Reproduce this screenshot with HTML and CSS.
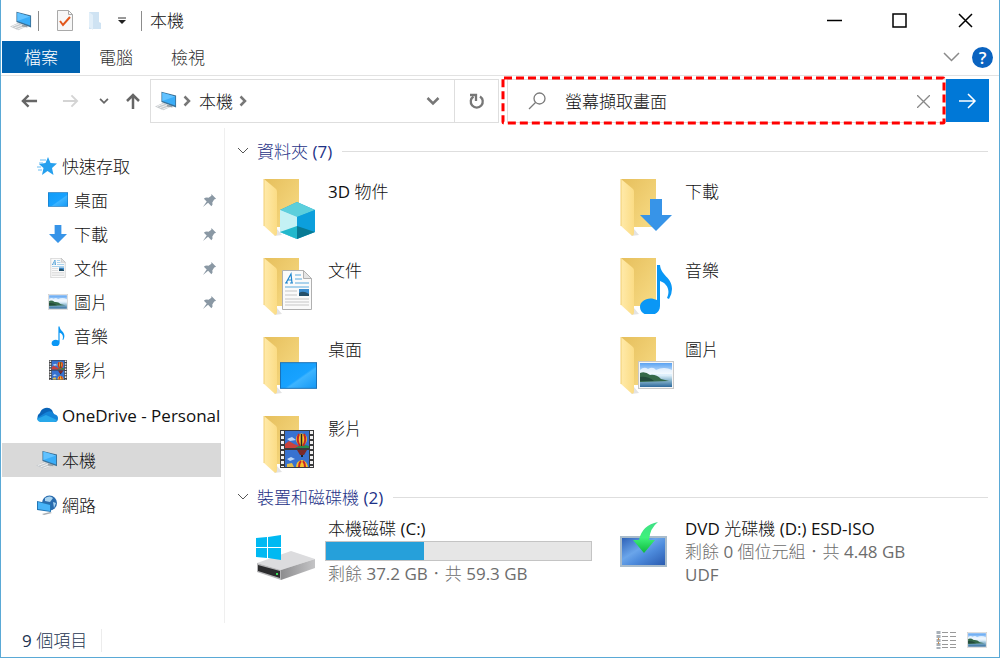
FILE: index.html
```html
<!DOCTYPE html>
<html lang="zh-Hant">
<head>
  <meta charset="UTF-8">
  <title>本機</title>
  <link rel="stylesheet" href="styles.css">
</head>
<body>
  <!-- shared icons -->
  <svg class="sprite" aria-hidden="true">
    <defs>
      <linearGradient id="gBack" x1="0" y1="0" x2="1" y2="1">
        <stop offset="0" stop-color="#e6bf5c"/><stop offset="1" stop-color="#f8dc86"/>
      </linearGradient>
      <linearGradient id="gFlap" x1="0" y1="0" x2="1" y2="0">
        <stop offset="0" stop-color="#ffeaaa"/><stop offset="1" stop-color="#fbdc85"/>
      </linearGradient>
      <linearGradient id="gSky" x1="0" y1="0" x2="0" y2="1">
        <stop offset="0" stop-color="#5aa2f2"/><stop offset="0.5" stop-color="#e4f3fd"/>
        <stop offset="0.72" stop-color="#8db8d0"/><stop offset="1" stop-color="#2f6a9c"/>
      </linearGradient>
      <linearGradient id="gDesk" x1="0" y1="0" x2="1" y2="1">
        <stop offset="0" stop-color="#109cf8"/><stop offset="0.55" stop-color="#18a2ff"/>
        <stop offset="0.6" stop-color="#3db4ff"/><stop offset="1" stop-color="#1599f5"/>
      </linearGradient>
      <linearGradient id="gDvd" x1="0" y1="0" x2="1" y2="1">
        <stop offset="0" stop-color="#2e62b8"/><stop offset="0.4" stop-color="#6aa5ea"/>
        <stop offset="0.6" stop-color="#4d8bdc"/><stop offset="1" stop-color="#2a5bb0"/>
      </linearGradient>
      <linearGradient id="gGreen" x1="0" y1="0" x2="0" y2="1">
        <stop offset="0" stop-color="#3fdf86"/><stop offset="0.5" stop-color="#3ff27c"/>
        <stop offset="1" stop-color="#0fb83c"/>
      </linearGradient>
      <linearGradient id="gMetal" x1="0" y1="0" x2="1" y2="0">
        <stop offset="0" stop-color="#8d8d8f"/><stop offset="1" stop-color="#c4c4c6"/>
      </linearGradient>
    </defs>

    <symbol id="folder" viewBox="0 0 64 64">
      <path d="M18 60l8-1-5-6z" fill="#e3e3e3"/>
      <path d="M8 3h35v48H18z" fill="url(#gBack)"/>
      <path d="M8 3l12 10q1 1 1 3v41q0 4-3 2L8 50z" fill="url(#gFlap)"/>
      <path d="M8 3v47" stroke="#f2cf74" stroke-width="1"/>
    </symbol>

    <symbol id="pc" viewBox="0 0 24 22">
      <path d="M0 17l9-4 9 4-9 4z" fill="#c6cacd"/>
      <path d="M2 17l8-3M5 18.500l8-3M8 20l8-3" stroke="#f4f4f4" stroke-width="1"/>
      <path d="M13 15l6 1v2l-6-1z" fill="#9aa1a6"/>
      <path d="M7 1l16 4v13L7 12z" fill="#3c7197"/>
      <path d="M8 2l14 4v10L8 11z" fill="#3aadf8"/>
      <path d="M8 2l14 4-14 5z" fill="#62c2ff"/>
    </symbol>

    <symbol id="desktop" viewBox="0 0 36 26">
      <rect width="36" height="26" fill="#1a72b8"/>
      <rect x="1" y="1" width="34" height="24" fill="url(#gDesk)"/>
    </symbol>

    <symbol id="down" viewBox="0 0 32 32">
      <path d="M10 0h12v16h10L16 32 0 16h10z" fill="#3794e8"/>
    </symbol>

    <symbol id="doc" viewBox="0 0 30 40">
      <path d="M.5.5h21l8 8v31H.5z" fill="#fafafa" stroke="#b0b0b0"/>
      <path d="M21.500.5v8h8z" fill="#e4e4e4" stroke="#b0b0b0"/>
      <path d="M4 13L9 4l1 9M6 10h4M3 13h3M8 13h3" stroke="#1f86cf" stroke-width="1.200" fill="none"/>
      <path d="M13 5h6M13 9h7M13 13h14M3 17h24" stroke="#5aaade" stroke-width="1"/>
      <path d="M3 21h12M3 25h12M3 29h24M3 32h24M3 35h24" stroke="#c6c6c6"/>
      <rect x="17" y="19" width="10" height="7" fill="#3c8ed0"/>
      <path d="M17 23q4-3 10 1v2H17z" fill="#24506a"/>
    </symbol>

    <symbol id="note" viewBox="0 0 32 50">
      <path d="M17 1h3c1 11 12 12 12 24q0 5-3 10l-2-1c4-9-1-15-7-17v25c0 12-20 12-20 1 0-7 9-11 17-7z" fill="#0a97f5"/>
    </symbol>

    <symbol id="picture" viewBox="0 0 36 28">
      <rect x=".5" y=".5" width="35" height="27" fill="#f6f6f6" stroke="#c8c8c8"/>
      <rect x="2" y="2" width="32" height="24" fill="url(#gSky)"/>
      <path d="M2 9q4-4 8-1 5-3 8 1 8-4 16 0v4H2z" fill="#fff" opacity=".7"/>
      <path d="M2 12q5-2 10 2 6-1 11 4l8 2-29 1z" fill="#35694a"/>
      <path d="M2 16q8-1 14 4H2z" fill="#234b3c"/>
    </symbol>

    <symbol id="film" viewBox="0 0 34 38">
      <rect width="34" height="38" fill="#3a3a3c"/>
      <rect x="5" y="1" width="24" height="17" fill="#3872d0"/>
      <rect x="5" y="20" width="24" height="17" fill="#3872d0"/>
      <path d="M2.500 1v36M31.500 1v36" stroke="#f1f1f1" stroke-width="3" stroke-dasharray="3 2"/>
      <path d="M5 18v-4l4-3 5 3 5 2h10v2z" fill="#c9433c"/>
      <path d="M15 18q7-5 14-2v2z" fill="#2a8a4c"/>
      <path d="M7 9l5-2 4 3-6 1zM7 29l4-2 4 2-5 2z" fill="#b9d4f6"/>
      <path d="M16 9a5.500 5.500 0 0 1 11 0q0 4-4 7h-3q-4-3-4-7z" fill="#f5c22c"/>
      <path d="M19 4q-3 6 1 12M24 4q3 6-1 12" stroke="#c62626" stroke-width="2" fill="none"/>
      <path d="M21.500 4v12" stroke="#222" stroke-width="1.500"/>
      <path d="M17 20h10l-3 5h-4z" fill="#7a2a2a"/><rect x="21" y="25" width="2" height="2" fill="#222"/>
      <path d="M16 37q0-6 6-7 5 1 6 7z" fill="#f5c22c"/>
      <path d="M19 37q0-4 2-6M25 37q0-4-2-6" stroke="#c62626" stroke-width="2" fill="none"/>
      <path d="M7 37v-3l5-1 2 4z" fill="#e3c04c"/>
    </symbol>

    <symbol id="pin" viewBox="0 0 16 16">
      <path d="M10 1l5 5-2 1-2 3q1 2-1 4L6.500 10.500 1 15l4-6-3-3q2-2 5-1l3-2z" fill="#8a98a4"/>
    </symbol>

    <symbol id="chevron" viewBox="0 0 12 8">
      <path d="M1 1l5 5 5-5" fill="none" stroke="currentColor"/>
    </symbol>
    <symbol id="chevron-bold" viewBox="0 0 14 10">
      <path d="M1.500 2L7 7.500 12.500 2" fill="none" stroke="currentColor" stroke-width="2.500"/>
    </symbol>
  </svg>

  <div class="window">
    <header class="titlebar">
      <svg class="title-pc"><use href="#pc"/></svg>
      <span class="sep"></span>
      <button class="quick quick-props" aria-label="內容">
        <svg width="16" height="21" viewBox="0 0 16 21"><path d="M.5.5h11l4 4v16H.5z" fill="#f7f7f7" stroke="#a9a9a9"/><path d="M11.500.5v4h4" fill="none" stroke="#a9a9a9"/><path d="M3 11l3 4 7-8" fill="none" stroke="#e2571c" stroke-width="2"/></svg>
      </button>
      <button class="quick quick-new" aria-label="新增資料夾">
        <svg width="14" height="20" viewBox="0 0 14 20"><path d="M1 1h10v10l2 1v6H1z" fill="#cfe3f3"/><path d="M1 1l4 3v15l-4-3z" fill="#e2eff9"/></svg>
      </button>
      <button class="quick quick-more" aria-label="自訂快速存取工具列">
        <svg width="8" height="8" viewBox="0 0 8 8"><path d="M0 1h8" stroke="#333" stroke-width="1"/><path d="M0 3h8L4 7z" fill="#222"/></svg>
      </button>
      <span class="sep"></span>
      <h1>本機</h1>
      <div class="controls">
        <button aria-label="最小化"><svg width="15" height="15"><path d="M0 7.500h15" stroke="#000" stroke-width="1.500"/></svg></button>
        <button aria-label="最大化"><svg width="15" height="15"><rect x="1" y="1" width="13" height="13" fill="none" stroke="#000" stroke-width="1.500"/></svg></button>
        <button aria-label="關閉"><svg width="15" height="15"><path d="M1 1l13 13M14 1L1 14" stroke="#000" stroke-width="1.500"/></svg></button>
      </div>
    </header>

    <div class="ribbon">
      <button class="tab file">檔案</button>
      <button class="tab">電腦</button>
      <button class="tab">檢視</button>
      <button class="expand" aria-label="展開功能區"><svg width="17" height="10" viewBox="0 0 17 10"><path d="M1 1l7.500 7.500L16 1" fill="none" stroke="#8a8a8a" stroke-width="1.500"/></svg></button>
      <button class="help" aria-label="說明">?</button>
    </div>

    <div class="navbar">
      <div class="nav-buttons">
        <button class="back" aria-label="上一頁"><svg width="17" height="14" viewBox="0 0 18 14"><path d="M17 7H2M8 1L2 7l6 6" fill="none" stroke="currentColor" stroke-width="2.500"/></svg></button>
        <button class="forward" aria-label="下一頁"><svg width="17" height="14" viewBox="0 0 18 14"><path d="M1 7h15M10 1l6 6-6 6" fill="none" stroke="currentColor" stroke-width="2"/></svg></button>
        <button class="recent" aria-label="最近"><svg width="10" height="8"><use href="#chevron-bold"/></svg></button>
        <button class="up" aria-label="上移"><svg width="14" height="16" viewBox="0 0 14 16"><path d="M7 16V2M1 8l6-6 6 6" fill="none" stroke="currentColor" stroke-width="2.500"/></svg></button>
      </div>
      <div class="address">
        <svg class="address-pc"><use href="#pc"/></svg>
        <svg class="crumb-arrow" viewBox="0 0 8 12"><path d="M1.500 1.500L6 6l-4.500 4.500" fill="none" stroke="#777" stroke-width="2.500"/></svg>
        <a href="#" class="crumb">本機</a>
        <svg class="crumb-arrow" viewBox="0 0 8 12"><path d="M1.500 1.500L6 6l-4.500 4.500" fill="none" stroke="#777" stroke-width="2.500"/></svg>
        <button class="history" aria-label="先前的位置"><svg width="14" height="10"><use href="#chevron-bold"/></svg></button>
        <button class="refresh" aria-label="重新整理"><svg width="16" height="16" viewBox="0 0 16 16"><path d="M11 3.500A6 6 0 1 1 4.500 3.500" fill="none" stroke="#777" stroke-width="2.300"/><path d="M1 2h6v6" fill="none" stroke="#777" stroke-width="2.300"/></svg></button>
      </div>
      <form class="search">
        <div class="search-box">
          <svg class="lens" viewBox="0 0 18 18"><circle cx="11.500" cy="6.500" r="5.500" fill="none" stroke="#7a7a7a" stroke-width="1.300"/><path d="M7.500 10.500L1 17" stroke="#7a7a7a" stroke-width="1.300"/></svg>
          <input type="text" value="螢幕擷取畫面" aria-label="搜尋">
          <button type="button" class="clear" aria-label="清除"><svg width="13" height="13"><path d="M0 0l13 13M13 0L0 13" stroke="#888" stroke-width="1.300"/></svg></button>
          <svg class="marker"><rect x="2" y="2" width="100%" height="45" rx="1"/></svg>
        </div>
        <button type="submit" class="go" aria-label="搜尋"><svg width="18" height="16" viewBox="0 0 18 16"><path d="M0 8h16M9 1l7 7-7 7" fill="none" stroke="#fff" stroke-width="1.500"/></svg></button>
      </form>
    </div>

    <div class="main">
      <nav class="sidebar">
        <a href="#"><svg class="ico" viewBox="0 0 22 20"><path d="M12 1l2.500 6 6.500.5-5 4.500 1.500 7L11.500 15 6 19l1.500-7L3 8l6.500-1z" fill="#26a0ee"/><path d="M4 4h6M3 7h4M1 11h4M2 14h4" stroke="#6bbdf2"/></svg>快速存取</a>
        <a href="#" class="sub"><svg class="ico"><use href="#desktop" x="0" y="2" width="20" height="15"/></svg>桌面<svg class="pin"><use href="#pin"/></svg></a>
        <a href="#" class="sub"><svg class="ico"><use href="#down" x="1" y="1" width="18" height="18"/></svg>下載<svg class="pin"><use href="#pin"/></svg></a>
        <a href="#" class="sub"><svg class="ico"><use href="#doc" x="2" y="0" width="16" height="20"/></svg>文件<svg class="pin"><use href="#pin"/></svg></a>
        <a href="#" class="sub"><svg class="ico"><use href="#picture" x="0" y="2" width="20" height="16"/></svg>圖片<svg class="pin"><use href="#pin"/></svg></a>
        <a href="#" class="sub"><svg class="ico"><use href="#note" x="3" y="0" width="14" height="20"/></svg>音樂</a>
        <a href="#" class="sub"><svg class="ico"><use href="#film" x="1" y="0" width="18" height="20"/></svg>影片</a>
        <a href="#" class="root"><svg class="ico" viewBox="0 0 22 16"><path d="M5 15a5 5 0 0 1-1-9 7 7 0 0 1 12-3l3 7-7 4z" fill="#0a64b8"/><path d="M9 6q6-4 9 1 4 1 4 4 0 4-3 4H5q-3-1-4-4z" fill="#1484d8"/><path d="M1 12l9-4 11 5q-1 2-3 2H5q-3 0-4-3z" fill="#28a8ea"/></svg>OneDrive - Personal</a>
        <a href="#" class="root selected"><svg class="ico"><use href="#pc"/></svg>本機</a>
        <a href="#" class="root"><svg class="ico" viewBox="0 0 22 20"><circle cx="13.500" cy="8" r="7.500" fill="#2b6cae"/><path d="M9 3q5-3 8 0l-3 4-5-1zM17 7l3 1-2 5z" fill="#a9d4f0"/><path d="M6 19l8-2 2 1-8 2z" fill="#a8adb2"/><path d="M1 6l14 3v8L1 15z" fill="#2476b4"/><path d="M2 7l12 3v6L2 14z" fill="#48b4f8"/></svg>網路</a>
      </nav>

      <section class="content">
        <button class="group"><svg width="12" height="8"><use href="#chevron"/></svg>資料夾 (7)<span class="rule"></span></button>
        <div class="tiles">
          <a href="#" class="tile">
            <svg class="big"><use href="#folder"/><path d="M24 34l17-8 18 8v22l-18 7-17-7z" fill="#16a6d8"/><path d="M24 34l17-8 18 8-18 7z" fill="#5ccfdc"/><path d="M24 34l17 7v22l-17-7z" fill="#a5e6ec"/><path d="M41 41v10L24 56V34z" fill="#c4f1f4"/><path d="M41 41l18-7v22l-18-5z" fill="#0c9fdc"/><path d="M41 50l18 6-18 7z" fill="#087a94"/><path d="M41 50v13l-17-7z" fill="#22b8cc"/></svg>
            <span class="info"><span class="name">3D 物件</span></span>
          </a>
          <a href="#" class="tile">
            <svg class="big"><use href="#folder"/><use href="#down" x="27" y="23" width="32" height="32"/></svg>
            <span class="info"><span class="name">下載</span></span>
          </a>
          <a href="#" class="tile">
            <svg class="big"><use href="#folder"/><use href="#doc" x="26" y="15" width="30" height="40"/></svg>
            <span class="info"><span class="name">文件</span></span>
          </a>
          <a href="#" class="tile">
            <svg class="big"><use href="#folder"/><use href="#note" x="27" y="9" width="32" height="50"/></svg>
            <span class="info"><span class="name">音樂</span></span>
          </a>
          <a href="#" class="tile">
            <svg class="big"><use href="#folder"/><use href="#desktop" x="24" y="28" width="37" height="27"/></svg>
            <span class="info"><span class="name">桌面</span></span>
          </a>
          <a href="#" class="tile">
            <svg class="big"><use href="#folder"/><use href="#picture" x="25" y="27" width="36" height="28"/></svg>
            <span class="info"><span class="name">圖片</span></span>
          </a>
          <a href="#" class="tile">
            <svg class="big"><use href="#folder"/><use href="#film" x="24" y="17" width="34" height="38"/></svg>
            <span class="info"><span class="name">影片</span></span>
          </a>
        </div>

        <button class="group"><svg width="12" height="8"><use href="#chevron"/></svg>裝置和磁碟機 (2)<span class="rule"></span></button>
        <div class="tiles devices">
          <a href="#" class="tile">
            <svg class="big"><path d="M1 41l34-12 24 8-34 11z" fill="#dcdcde"/><path d="M25 48l34-11v9L25 58z" fill="url(#gMetal)"/><path d="M1 41l24 7v10L1 50z" fill="#b5b5b7"/><path d="M2 43l22 6v7L2 49z" fill="#2c2c2e"/><rect x="20" y="51" width="2" height="2" fill="#3be05a"/><path d="M0 16l11-1v10H0zM12 15l13-2v12H12zM0 26h11v10l-11-1zM12 26h13v12l-13-2z" fill="#00b9f2"/></svg>
            <span class="info">
              <span class="name">本機磁碟 (C:)</span>
              <span class="bar"><span class="used" style="width: 37%"></span></span>
              <span class="detail">剩餘 37.2 GB．共 59.3 GB</span>
            </span>
          </a>
          <a href="#" class="tile">
            <svg class="big"><path d="M7 14h47v31H7z" fill="#a9bccb"/><path d="M9 16h43v27H9z" fill="url(#gDvd)"/><path d="M45 0q-8 6-9 18h6L31 31 20 18h6Q29 3 45 0z" fill="url(#gGreen)"/></svg>
            <span class="info">
              <span class="name">DVD 光碟機 (D:) ESD-ISO</span>
              <span class="detail">剩餘 0 個位元組．共 4.48 GB</span>
              <span class="detail">UDF</span>
            </span>
          </a>
        </div>
      </section>
    </div>

    <footer class="status">
      <span class="count">9 個項目</span>
      <button aria-label="詳細資料"><svg width="20" height="20" viewBox="0 0 20 20"><path d="M2.500 1v18" stroke="#a8b0b8" stroke-width="4" stroke-dasharray="3 1"/><path d="M2 9h1M2 13h1" stroke="#c98a4a" stroke-width="2"/><path d="M6 2.500h6M6 6.500h6M6 10.500h6M6 14.500h6M6 17.500h6M14 2.500h6M14 6.500h6M14 10.500h6M14 14.500h6M14 17.500h6" stroke="#999"/></svg></button>
      <button aria-label="大圖示"><svg width="20" height="16"><use href="#picture"/></svg></button>
    </footer>
  </div>
</body>
</html>
```
FILE: styles.css
```css
* {
  box-sizing: border-box;
}

body {
  margin: 0;
  font-family: "Open Sans", "Noto Sans CJK TC Light", "Noto Sans CJK TC", sans-serif;
  font-size: 17px;
  line-height: 23px;
  color: #111;
  background: #fff;
}

button {
  display: flex;
  align-items: center;
  justify-content: center;
  margin: 0;
  padding: 0;
  border: 0;
  background: none;
  font: inherit;
  color: inherit;
}

a {
  color: inherit;
  text-decoration: none;
}

svg {
  flex: none;
}

.sprite {
  position: absolute;
  width: 0;
  height: 0;
}

.window {
  display: flex;
  flex-direction: column;
  min-height: 100vh;
  border: 1px solid #5aa9d6;
  border-top: 0;
}

/* title bar */
.titlebar {
  display: flex;
  align-items: center;
  height: 41px;
  padding-left: 9px;
}

.titlebar h1 {
  margin: 0 0 0 8px;
  font-size: inherit;
  font-weight: inherit;
}

.title-pc,
.address-pc {
  width: 22px;
  height: 22px;
}

.sep {
  width: 1px;
  height: 20px;
  margin-left: 6px;
  background: #8c8c8c;
}

.quick {
  height: 24px;
}

.quick-props {
  margin-left: 18px;
}

.quick-new {
  margin-left: 15px;
}

.quick-more {
  margin: 0 9px 0 16px;
}

.controls {
  display: flex;
  align-self: stretch;
  margin-left: auto;
}

.controls button {
  width: 65px;
}

.controls button:last-child {
  width: 67px;
}

/* ribbon tabs */
.ribbon {
  display: flex;
  align-items: center;
  height: 35px;
  padding: 0 6px 2px 1px;
  border-bottom: 1px solid #e2e2e2;
}

.tab {
  height: 32px;
  padding: 0 19px;
  color: #333;
}

.tab.file {
  padding: 0 22px;
  background: #0063b1;
  color: #fff;
}

.expand {
  margin: 0 12px 0 auto;
}

.help {
  width: 21px;
  height: 21px;
  border-radius: 50%;
  background: #0a63c0;
  color: #fff;
  font-weight: 600;
}

/* navigation row */
.navbar {
  display: flex;
  padding: 3px 10px 5px 20px;
}

.nav-buttons {
  display: flex;
  align-items: center;
  width: 129px;
  color: #666;
}

.forward {
  margin-left: 24px;
  color: #d4d4d4;
}

.recent {
  margin-left: 20px;
}

.up {
  margin-left: 17px;
}

.address {
  display: flex;
  flex: 343;
  align-items: center;
  height: 44px;
  padding-left: 4px;
  border: 1px solid #dedede;
}

.crumb-arrow {
  width: 8px;
  height: 12px;
  margin: 0 6px;
}

.crumb {
  margin-left: 2px;
}

.history {
  width: 42px;
  height: 42px;
  margin-left: auto;
  color: #777;
}

.refresh {
  width: 44px;
  height: 42px;
  border-left: 1px solid #dedede;
}

.search {
  display: flex;
  flex: 482;
  margin-left: 8px;
}

.search-box {
  position: relative;
  display: flex;
  flex: 1;
  align-items: center;
  height: 44px;
  padding-left: 20px;
  border: 1px solid #dedede;
}

.lens {
  width: 18px;
  height: 18px;
}

.search-box input {
  flex: 1;
  min-width: 0;
  margin-left: 19px;
  padding: 0;
  border: 0;
  outline: 0;
  background: none;
  font: inherit;
  color: inherit;
}

.clear {
  width: 44px;
  height: 42px;
}

/* dashed highlight around the search box */
.marker {
  position: absolute;
  top: -4px;
  left: -7px;
  width: calc(100% + 4px);
  height: 49px;
  overflow: visible;
  pointer-events: none;
}

.marker rect {
  fill: none;
  stroke: #f00;
  stroke-width: 3px;
  stroke-dasharray: 8 4;
}

.go {
  width: 43px;
  height: 43px;
  background: #0078d7;
}

/* main area */
.main {
  display: flex;
  flex: 1;
}

.sidebar {
  width: 224px;
  padding: 21px 3px 0 1px;
  border-right: 1px solid #efefef;
}

.sidebar a {
  display: flex;
  align-items: center;
  height: 34px;
  padding-left: 34px;
  white-space: nowrap;
}

.sidebar .sub {
  padding-left: 46px;
}

.sidebar .root {
  margin-top: 11px;
}

.sidebar .selected {
  background: #d9d9d9;
}

.ico {
  width: 22px;
  height: 20px;
  margin-right: 4px;
}

.pin {
  width: 15px;
  height: 15px;
  margin: 0 4px 0 auto;
}

.content {
  flex: 1;
  padding: 10px 11px 0 12px;
}

.group {
  width: 100%;
  height: 26px;
  color: #1e3287;
}

.group svg {
  margin-right: 8px;
  color: #555;
}

.rule {
  flex: 1;
  height: 1px;
  margin-left: 10px;
  background: #dedede;
}

.tiles {
  display: grid;
  grid-template-columns: repeat(auto-fill, 357px);
  grid-auto-rows: 79px;
  margin-bottom: 4px;
  padding-left: 19px;
}

.tile {
  display: flex;
  gap: 5px;
  padding-top: 12px;
}

.big {
  width: 64px;
  height: 64px;
}

.info {
  display: flex;
  flex-direction: column;
  width: 267px;
  padding-top: 4px;
}

/* three text lines start a little above the icon */
.devices .info {
  margin-top: -5px;
  padding-top: 0;
}

.name,
.detail {
  padding-left: 3px;
}

.detail {
  color: #6d6d6d;
}

.bar {
  height: 20px;
  margin: 1px 0;
  border: 1px solid #c4c4c4;
  background: #e6e6e6;
}

.used {
  display: block;
  height: 18px;
  background: #26a0da;
}

/* status bar */
.status {
  display: flex;
  align-items: center;
  height: 34px;
  padding: 0 12px 0 21px;
  color: #1c3350;
}

.count {
  margin-right: auto;
  padding-right: 14px;
  border-right: 1px solid #ececec;
}

.status button {
  margin-left: 11px;
}
```
